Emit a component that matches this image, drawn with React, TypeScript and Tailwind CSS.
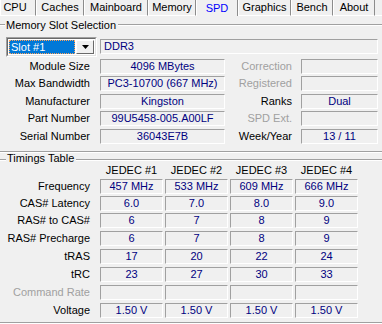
import React from "react";

const tabs: { label: string; cls: string; selected?: boolean }[] = [
  { label: "CPU", cls: "w-[36px] pr-[6px]" },
  { label: "Caches", cls: "w-[48px]" },
  { label: "Mainboard", cls: "w-[64px]" },
  { label: "Memory", cls: "w-[48px]" },
  { label: "SPD", cls: "w-[42px]", selected: true },
  { label: "Graphics", cls: "w-[53px]" },
  { label: "Bench", cls: "w-[42px]" },
  { label: "About", cls: "w-[42px]" },
];

function Line({ className = "" }: { className?: string }) {
  return (
    <div
      className={`h-[2px] border-t border-b border-t-[#a0a0a0] border-b-white ${className}`}
    />
  );
}

function Box({
  className = "",
  children,
  left,
}: {
  className?: string;
  children?: React.ReactNode;
  left?: boolean;
}) {
  return (
    <div
      className={`h-[15px] flex items-center border border-t-[#a0a0a0] border-l-[#a0a0a0] border-r-white border-b-white text-[#000080] whitespace-nowrap overflow-hidden ${
        left ? "justify-start pl-[3px]" : "justify-center"
      } ${className}`}
    >
      {children}
    </div>
  );
}

const slotRows = [
  { l: "Module Size", v: "4096 MBytes", rl: "Correction", rv: "", dis: true, mt: "mt-[2px]" },
  { l: "Max Bandwidth", v: "PC3-10700 (667 MHz)", rl: "Registered", rv: "", dis: true, mt: "mt-[2px]" },
  { l: "Manufacturer", v: "Kingston", rl: "Ranks", rv: "Dual", dis: false, mt: "mt-[3px]" },
  { l: "Part Number", v: "99U5458-005.A00LF", rl: "SPD Ext.", rv: "", dis: true, mt: "mt-[2px]" },
  { l: "Serial Number", v: "36043E7B", rl: "Week/Year", rv: "13 / 11", dis: false, mt: "mt-[3px]" },
];

const timingRows = [
  { l: "Frequency", v: ["457 MHz", "533 MHz", "609 MHz", "666 MHz"], mt: "mt-[2px]", dis: false },
  { l: "CAS# Latency", v: ["6.0", "7.0", "8.0", "9.0"], mt: "mt-[2px]", dis: false },
  { l: "RAS# to CAS#", v: ["6", "7", "8", "9"], mt: "mt-[2px]", dis: false },
  { l: "RAS# Precharge", v: ["6", "7", "8", "9"], mt: "mt-[3px]", dis: false },
  { l: "tRAS", v: ["17", "20", "22", "24"], mt: "mt-[3px]", dis: false },
  { l: "tRC", v: ["23", "27", "30", "33"], mt: "mt-[3px]", dis: false },
  { l: "Command Rate", v: ["", "", "", ""], mt: "mt-[3px]", dis: true },
  { l: "Voltage", v: ["1.50 V", "1.50 V", "1.50 V", "1.50 V"], mt: "mt-[3px]", dis: false },
];

export default function App() {
  return (
    <div className="w-[382px] h-[324px] bg-[#f0f0f0] overflow-hidden text-[11px] leading-[13px] text-black font-['Liberation_Sans',Arial,sans-serif] flex flex-col">
      {/* Tabs */}
      <div className="flex h-[16px] shrink-0">
        {tabs.map((t) => (
          <div
            key={t.label}
            className={`${t.cls} flex items-center justify-center border-l border-l-white border-r border-r-[#8c8c8c] ${
              t.selected
                ? "text-[#0000ff] border-b-0"
                : "border-b border-b-white"
            }`}
          >
            {t.label}
          </div>
        ))}
        <div className="flex-1 border-b border-b-white" />
      </div>

      {/* Memory Slot Selection heading */}
      <div className="flex items-center h-[18px] shrink-0">
        <Line className="w-[5px]" />
        <div className="ml-[1px] mr-[2px] whitespace-nowrap">Memory Slot Selection</div>
        <Line className="flex-1" />
      </div>

      {/* Slot row */}
      <div className="flex mt-[3px] h-[20px] shrink-0">
        <div className="ml-[6px] w-[91px] h-[20px] flex border border-t-[#a0a0a0] border-l-[#a0a0a0] border-r-white border-b-white">
          <div className="flex-1 flex border border-t-[#696969] border-l-[#696969] border-r-[#e3e3e3] border-b-[#e3e3e3] bg-white p-[1px]">
            <div className="flex-1 flex items-center bg-[#0078d7] text-white pl-[1px] border border-dotted border-[#ffa25a]">
              Slot #1
            </div>
            <div className="w-[18px] ml-[1px] flex items-center justify-center bg-[#f0f0f0] border border-t-white border-l-white border-r-[#696969] border-b-[#696969]">
              <svg width="7" height="4" viewBox="0 0 7 4">
                <path d="M0 0h7L3.5 4z" fill="#000" />
              </svg>
            </div>
          </div>
        </div>
        <Box left className="ml-[3px] mt-[2px] w-[278px]">
          DDR3
        </Box>
      </div>

      {/* Slot info rows */}
      {slotRows.map((r) => (
        <div key={r.l} className={`flex items-center h-[15px] shrink-0 ${r.mt}`}>
          <div className="w-[90px] text-right whitespace-nowrap">{r.l}</div>
          <Box className="ml-[10px] w-[125px]">{r.v}</Box>
          <div
            className={`w-[67px] text-right whitespace-nowrap ${
              r.dis ? "text-[#a0a0a0]" : "text-black"
            }`}
          >
            {r.rl}
          </div>
          <Box className="ml-[9px] w-[77px]">{r.rv}</Box>
        </div>
      ))}

      <Line className="mt-[7px] w-full shrink-0" />

      {/* Timings heading */}
      <div className="flex items-center h-[11px] shrink-0">
        <Line className="w-[6px] self-start mt-[6px]" />
        <div className="ml-[1px] mr-[2px] whitespace-nowrap">Timings Table</div>
        <Line className="flex-1 self-start mt-[6px]" />
      </div>

      {/* JEDEC header */}
      <div className="flex items-center h-[13px] shrink-0">
        <div className="w-[100px]" />
        <div className="flex gap-[2px]">
          {["JEDEC #1", "JEDEC #2", "JEDEC #3", "JEDEC #4"].map((h) => (
            <div key={h} className="w-[63px] text-center whitespace-nowrap">
              {h}
            </div>
          ))}
        </div>
      </div>

      {timingRows.map((r) => (
        <div key={r.l} className={`flex items-center h-[15px] shrink-0 ${r.mt}`}>
          <div
            className={`w-[90px] text-right whitespace-nowrap ${
              r.dis ? "text-[#a0a0a0]" : "text-black"
            }`}
          >
            {r.l}
          </div>
          <div className="ml-[10px] flex gap-[2px]">
            {r.v.map((v, i) => (
              <Box key={i} className="w-[63px]">
                {v}
              </Box>
            ))}
          </div>
        </div>
      ))}

      <Line className="mt-[4px] w-full shrink-0" />
    </div>
  );
}
